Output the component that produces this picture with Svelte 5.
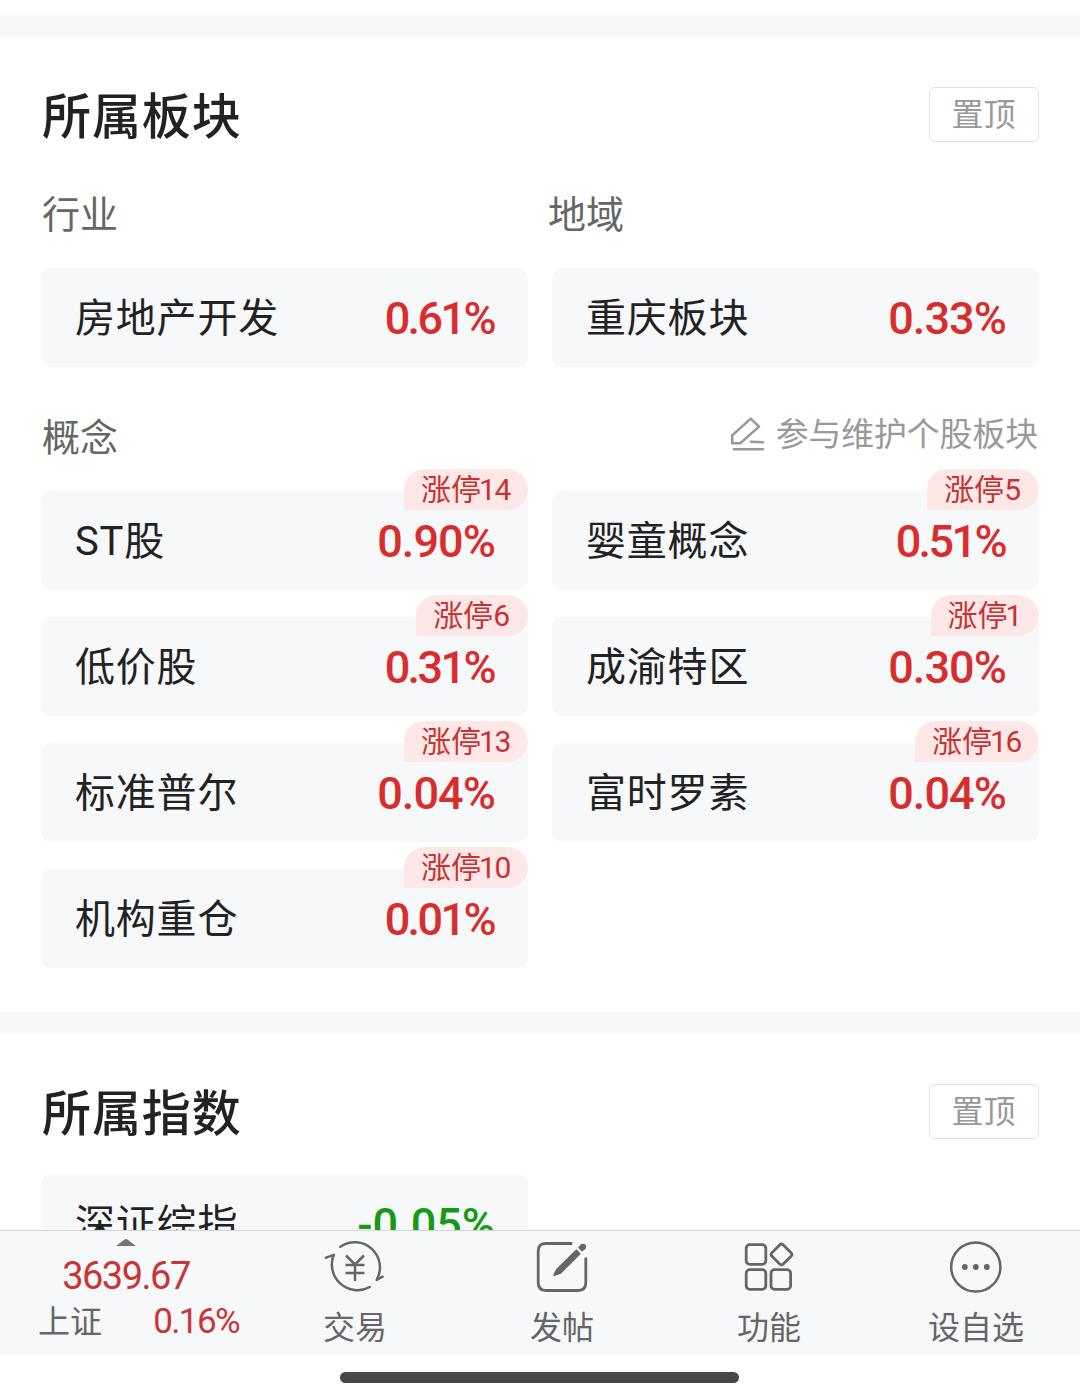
<script lang="ts">
	type Item = { name: string; change: string; limit?: number };

	const industry: Item = { name: '房地产开发', change: '0.61%' };
	const region: Item = { name: '重庆板块', change: '0.33%' };

	const concepts: Item[] = [
		{ name: 'ST股', change: '0.90%', limit: 14 },
		{ name: '婴童概念', change: '0.51%', limit: 5 },
		{ name: '低价股', change: '0.31%', limit: 6 },
		{ name: '成渝特区', change: '0.30%', limit: 1 },
		{ name: '标准普尔', change: '0.04%', limit: 13 },
		{ name: '富时罗素', change: '0.04%', limit: 16 },
		{ name: '机构重仓', change: '0.01%', limit: 10 }
	];

	const indices: Item[] = [{ name: '深证综指', change: '-0.05%' }];
</script>

{#snippet card(item: Item)}
	<div class="card">
		<span class="name">{item.name}</span>
		<span
			class="change"
			class:down={item.change.startsWith('-')}
			class:narrow={item.change.includes('1')}>{item.change}</span
		>
		{#if item.limit}
			<span class="badge">涨停<span class:one={String(item.limit).startsWith('1')}>{item.limit}</span></span>
		{/if}
	</div>
{/snippet}

<div class="screen">
	<main>
		<section>
			<header>
				<h2>所属板块</h2>
				<button class="pin">置顶</button>
			</header>
			<div class="labels">
				<span>行业</span>
				<span>地域</span>
			</div>
			<div class="grid">
				{@render card(industry)}
				{@render card(region)}
			</div>
			<div class="concept-head">
				<span>概念</span>
				<a class="maintain" href="#maintain">
					<svg width="36" height="36" viewBox="0 0 36 36" fill="none" stroke="#999" stroke-width="2.6" stroke-linejoin="round" stroke-linecap="round">
						<path d="M10.3 26.2H2.2V18.4L20.7 1.6 29 9.6 10.3 26.2M21 24.7 33 25.2M3.8 32.2H33" />
					</svg>
					<span>参与维护个股板块</span>
				</a>
			</div>
			<div class="grid">
				{#each concepts as item}
					{@render card(item)}
				{/each}
			</div>
		</section>

		<section class="index-section">
			<header>
				<h2>所属指数</h2>
				<button class="pin">置顶</button>
			</header>
			<div class="grid">
				{#each indices as item}
					{@render card(item)}
				{/each}
			</div>
		</section>
	</main>

	<nav>
		<div class="quote">
			<svg class="caret" width="20" height="7" viewBox="0 0 20 7"><path d="M0 7 8.5.6Q10-.4 11.5.6L20 7Z" fill="#757575" /></svg>
			<span class="price">3639.67</span>
			<div class="quote-row">
				<span>上证</span>
				<span class="percent">0.16%</span>
			</div>
		</div>
		<div class="tabs">
			<div class="tab">
				<svg width="64" height="56" viewBox="0 0 64 56" fill="none" stroke="#666" stroke-width="2.5" stroke-linecap="round" stroke-linejoin="round">
					<path d="M18.3 6.8A25.2 25.2 0 0 1 54.6 40L60.7 36.7" />
					<path d="M4 17.7 11.8 14.8A25.6 25.6 0 0 0 47.8 47" />
					<path d="M24 15.5 33 24.5 42 15.5M33 24.5V41M23.5 25H42.5M23.5 33H42.5" stroke-linecap="butt" />
				</svg>
				<span>交易</span>
			</div>
			<div class="tab">
				<svg width="64" height="56" viewBox="0 0 64 56" fill="none" stroke="#666" stroke-width="2.8">
					<path d="M43.3 3.5H17Q9.2 3.5 9.2 11V42.5Q9.2 50.5 17 50.5H49Q56.8 50.5 56.8 42.5V17.5" />
					<path d="M47.4 10.4 50.6 13.8 31.5 32.8 25.2 35.2 27.8 29.6Z" fill="#666" stroke-width="1.8" stroke-linejoin="round" />
					<path d="M51 9.6 54 6.8" stroke-width="6" />
					<path d="M54 6.7H54.1" stroke-width="6" stroke-linecap="round" />
				</svg>
				<span>发帖</span>
			</div>
			<div class="tab">
				<svg width="64" height="56" viewBox="0 0 64 56" fill="none" stroke="#666" stroke-width="2.8" stroke-linejoin="round">
					<rect x="10.2" y="4.7" width="19.6" height="19.6" rx="3.5" />
					<rect x="10.2" y="29.7" width="19.6" height="19.6" rx="3.5" />
					<rect x="35" y="29.7" width="19.6" height="19.6" rx="3.5" />
					<rect x="37.5" y="6.5" width="16" height="16" rx="2.5" transform="rotate(45 45.5 14.5)" />
				</svg>
				<span>功能</span>
			</div>
			<div class="tab">
				<svg width="64" height="56" viewBox="0 0 64 56" fill="none" stroke="#666" stroke-width="2.5">
					<circle cx="32.8" cy="27" r="24.6" />
					<g fill="#666" stroke="none">
						<circle cx="21.8" cy="27" r="2.9" />
						<circle cx="32.8" cy="27" r="2.9" />
						<circle cx="43.8" cy="27" r="2.9" />
					</g>
				</svg>
				<span>设自选</span>
			</div>
		</div>
	</nav>
	<div class="home"><i></i></div>
</div>

<style>
	:global(body) {
		background: #fff;
	}

	.screen {
		display: flex;
		flex-direction: column;
		height: 1387px;
		overflow: hidden;
		font-family: Roboto, 'Noto Sans CJK SC', sans-serif;
		color: #222;
	}

	main {
		height: 1215px;
		padding-top: 15px;
		overflow: hidden;
	}

	section {
		height: 925px;
		padding: 50px 41px 0;
		border-top: 22px solid #f7f8fa;
	}

	header {
		display: flex;
		align-items: center;
		justify-content: space-between;
		height: 55px;
	}

	h2 {
		margin: 0;
		padding: 5px 0 0 1px;
		font-size: 49px;
		font-weight: 500;
		letter-spacing: 0.9px;
		line-height: 55px;
	}

	.pin {
		width: 110px;
		height: 55px;
		padding: 0 1px 0 0;
		border: 1px solid #e2e2e2;
		border-radius: 6px;
		background: #fff;
		color: #999;
		font: inherit;
		font-size: 32px;
		line-height: 52px;
	}

	.labels,
	.concept-head {
		padding-left: 1px;
		color: #666;
		font-size: 38px;
		line-height: 50px;
	}

	.labels {
		display: grid;
		grid-template-columns: 506px 1fr;
		margin: 48px 0 28px;
	}

	.grid {
		display: grid;
		grid-template-columns: 1fr 1fr;
		gap: 27px 24px;
	}

	.card {
		position: relative;
		display: flex;
		align-items: center;
		justify-content: space-between;
		height: 99px;
		padding: 0 33px 0 34px;
		box-sizing: border-box;
		border-radius: 10px;
		background: #f7f8fa;
	}

	.name {
		padding-bottom: 6px;
		font-size: 40px;
		letter-spacing: 0.8px;
	}

	.change {
		padding-top: 1px;
		color: #d92d2d;
		font-size: 45px;
		font-weight: 500;
		letter-spacing: -0.9px;
	}

	.change.narrow {
		padding-right: 1px;
		letter-spacing: -2.6px;
	}

	.change.down {
		color: #169a16;
		letter-spacing: 0;
	}

	.badge {
		position: absolute;
		top: -22px;
		right: 0;
		height: 41px;
		padding: 0 18px 0 17px;
		border-radius: 21px 21px 21px 0;
		background: #fde8e7;
		color: #c93232;
		font-size: 30px;
		line-height: 42px;
	}

	.badge .one {
		margin-left: -2px;
		letter-spacing: -1.4px;
	}

	.concept-head {
		display: flex;
		justify-content: space-between;
		height: 50px;
		margin: 46px 0 28px;
	}

	.maintain {
		display: flex;
		align-items: center;
		gap: 10px;
		height: 44px;
		padding-right: 1px;
		color: #999;
		font-size: 32.8px;
		text-decoration: none;
	}

	.index-section {
		height: 300px;
	}

	.index-section .grid {
		margin-top: 35px;
	}

	nav {
		display: flex;
		height: 125px;
		box-sizing: border-box;
		border-top: 1px solid #d3d4d7;
		background: #f7f8fa;
		color: #666;
	}

	.quote {
		display: flex;
		flex-direction: column;
		align-items: center;
		width: 251px;
		padding-top: 8px;
		box-sizing: border-box;
	}

	.price {
		margin-top: 7px;
		padding-left: 1px;
		color: #cb3434;
		font-size: 38px;
		line-height: 46px;
		letter-spacing: -1.5px;
	}

	.quote-row {
		display: flex;
		justify-content: space-between;
		align-items: center;
		align-self: stretch;
		padding: 0 12px 0 38px;
		font-size: 32px;
		line-height: 44px;
	}

	.percent {
		padding-top: 1px;
		color: #cb3434;
		font-size: 35px;
		letter-spacing: -1.6px;
	}

	.tabs {
		display: grid;
		grid-template-columns: repeat(4, 207px);
	}

	.tab {
		display: flex;
		flex-direction: column;
		align-items: center;
		padding-top: 9px;
		font-size: 32px;
		line-height: 44px;
	}

	.tab svg {
		margin-right: 1px;
	}

	.tab span {
		margin-top: 10px;
		padding-left: 1px;
	}

	.home {
		display: flex;
		justify-content: center;
		padding: 17px 1px 0 0;
	}

	.home i {
		width: 399px;
		height: 11px;
		border-radius: 6px;
		background: #474747;
	}
</style>
